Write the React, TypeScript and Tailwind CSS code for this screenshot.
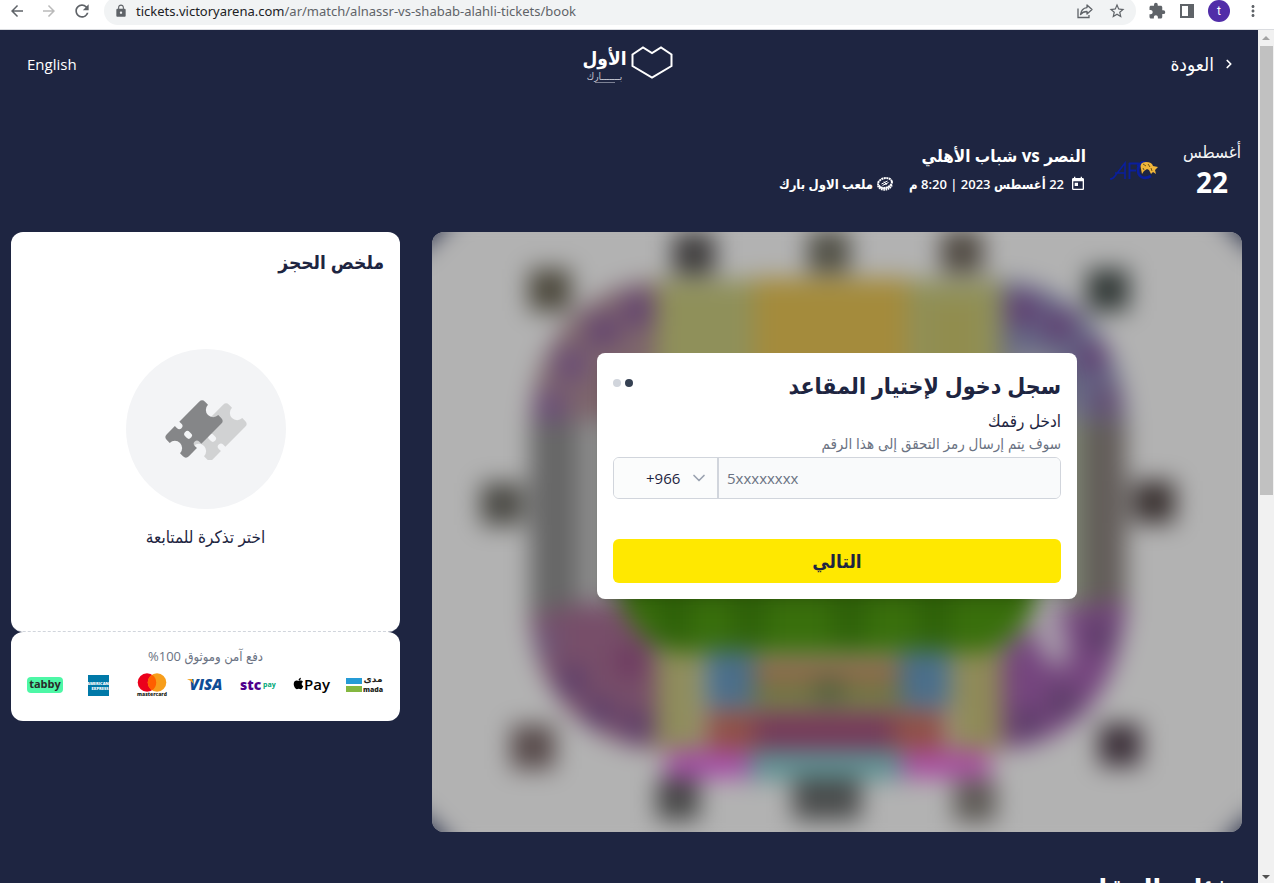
import type { ReactNode } from "react";
import {
  MdArrowBack,
  MdArrowForward,
  MdExtension,
  MdLock,
  MdMoreVert,
  MdRefresh,
  MdStarBorder,
  MdToday,
} from "react-icons/md";
import { FaApple } from "react-icons/fa";
import { LuChevronDown, LuChevronRight } from "react-icons/lu";

type Block = [x: number, y: number, w: number, h: number, fill: string];

const gates: Block[] = [
  [241, 1, 42, 42, "#3e3c3c"],
  [376, -1, 42, 42, "#504f45"],
  [509, -1, 42, 42, "#504a42"],
  [97, 37, 42, 42, "#4c483c"],
  [655, 37, 42, 42, "#323937"],
  [49, 251, 42, 42, "#4a4944"],
  [701, 249, 42, 42, "#3a3231"],
  [79, 493, 44, 44, "#584b4b"],
  [667, 492, 42, 42, "#3c3039"],
  [225, 546, 42, 42, "#464646"],
  [361, 546, 68, 42, "#4a4c4c"],
  [522, 548, 42, 42, "#5e5a56"],
];

const stands: Block[] = [
  [224, 48, 98, 100, "#8f905a"],
  [322, 46, 154, 100, "#a48b3c"],
  [476, 48, 94, 100, "#8f905a"],
  [497, 70, 50, 80, "#918d4e"],
  [224, 420, 46, 98, "#8f8d5c"],
  [520, 420, 50, 98, "#8f8a58"],
  [274, 418, 48, 58, "#4a6e8a"],
  [468, 418, 50, 58, "#4a6e8a"],
  [322, 426, 146, 26, "#8c684a"],
  [322, 452, 146, 26, "#6f7842"],
  [384, 446, 26, 26, "#54603e"],
  [274, 478, 48, 40, "#905046"],
  [462, 478, 52, 40, "#905046"],
  [322, 480, 140, 38, "#763858"],
  [234, 518, 84, 28, "#a44ea6"],
  [318, 518, 152, 30, "#609294"],
  [470, 518, 88, 28, "#a84ea0"],
];

const seatClusters: Block[] = [
  [104, 160, 30, 30, "#6a4e78"],
  [124, 118, 30, 30, "#6a4c76"],
  [156, 84, 30, 30, "#644470"],
  [192, 62, 30, 32, "#644470"],
  [576, 62, 30, 32, "#604072"],
  [612, 80, 30, 28, "#604072"],
  [646, 112, 28, 28, "#604072"],
  [660, 155, 28, 28, "#634c70"],
  [104, 395, 24, 30, "#6d5474"],
  [126, 435, 28, 28, "#5e406a"],
  [154, 466, 28, 28, "#5e406a"],
  [192, 480, 28, 28, "#5e406a"],
  [184, 414, 30, 30, "#6e3a60"],
  [654, 390, 28, 28, "#5c3e68"],
  [616, 456, 30, 28, "#5c3e68"],
  [580, 478, 30, 28, "#5c3e68"],
];

function StadiumMap() {
  return (
    <svg
      className="block h-full w-full"
      viewBox="0 0 810 600"
      preserveAspectRatio="xMidYMid slice"
      aria-hidden="true"
    >
      <defs>
        <filter id="haze" x="-5%" y="-5%" width="110%" height="110%" colorInterpolationFilters="sRGB">
          <feGaussianBlur stdDeviation="12" />
        </filter>
      </defs>
      <rect width="810" height="600" fill="#b2b2b2" />
      <g filter="url(#haze)">
        <path d="M-20-20H830V620H-20Z" fill="#b2b2b2" />
        <path d="M-20-20H27L-20 27ZM830-20H783L830 27ZM-20 620H27L-20 573ZM830 620H783L830 573Z" fill="#1e2541" />
        <path d="M98 188H146V390H98Z" fill="#666" />
        <path d="M146 188H190V390H146Z" fill="#8e8e8e" />
        <path d="M650 188H694V390H650Z" fill="#625c59" />
        <path d="M634 188H652V390H634Z" fill="#77806a" />
        <path d="M98 188C104 105 150 55 225 48V188Z" fill="#7d656c" />
        <path d="M569 48C645 55 688 105 694 188H620L569 150Z" fill="#656785" />
        <path d="M622 125L645 188H580V120Z" fill="#8b8b92" />
        <path d="M98 384C104 460 150 510 225 518V418L190 372H150Z" fill="#774e69" />
        <path d="M569 518C645 510 688 460 694 370L620 378L569 420Z" fill="#75457e" />
        <path d="M592 380L632 384L638 434L614 430Z" fill="#a89cab" />
        <path d="M188 190H604V372C590 404 570 420 545 422H250C220 420 200 395 188 370Z" fill="#396f0c" />
        {[225, 300, 400, 485].map((x) => (
          <path key={x} d={`M${x} 360h34v54h-34z`} fill="#2f620a" />
        ))}
        {[...stands, ...seatClusters, ...gates].map(([x, y, w, h, fill]) => (
          <rect key={`${x}-${y}-${fill}`} x={x} y={y} width={w} height={h} fill={fill} />
        ))}
      </g>
    </svg>
  );
}

function ShareIcon() {
  return (
    <svg className="size-4" viewBox="0 0 16 16" fill="none" stroke="#5f6368" strokeWidth="1.3" aria-hidden="true">
      <path d="M1 5.500V14.500H12V12" />
      <path d="M10 2L15 6.500L10 11V8.500C7 8.500 5 9.500 3.500 11.500C4 7.500 6.500 5 10 4.600Z" strokeLinejoin="round" />
    </svg>
  );
}

function BrowserBar() {
  return (
    <div
      dir="ltr"
      className="flex h-[30px] shrink-0 items-center border-b border-[#dadce0] bg-white pb-[7px] pl-2 pr-3 text-[#5f6368]"
    >
      <div className="flex gap-[14px]">
        <button type="button" aria-label="Back"><MdArrowBack className="size-[18px]" /></button>
        <button type="button" aria-label="Forward" className="text-[#bababa]"><MdArrowForward className="size-[18px]" /></button>
        <button type="button" aria-label="Reload"><MdRefresh className="size-5" /></button>
      </div>
      <div className="ml-3 flex h-7 flex-1 items-center rounded-full bg-[#f1f3f4] pl-[10px] pr-[10px]">
        <MdLock className="mr-2 size-[14px]" />
        <div className="flex-1 font-['Noto_Sans',sans-serif] text-[13px] leading-5">
          <span className="text-[#202124]">tickets.victoryarena.com</span>
          /ar/match/alnassr-vs-shabab-alahli-tickets/book
        </div>
        <div className="flex items-center gap-[15px]">
          <button type="button" aria-label="Share"><ShareIcon /></button>
          <button type="button" aria-label="Bookmark"><MdStarBorder className="size-[18px]" /></button>
        </div>
      </div>
      <div className="ml-3 flex items-center gap-[14px]">
        <button type="button" aria-label="Extensions"><MdExtension className="size-[18px]" /></button>
        <button type="button" aria-label="Side panel" className="flex h-[14px] w-[14px] border-2 border-[#5f6368]">
          <span className="ml-auto h-full w-1 bg-[#5f6368]" />
        </button>
        <button
          type="button"
          aria-label="Profile"
          className="flex size-[22px] items-center justify-center rounded-full bg-[#512da8] font-['Roboto',sans-serif] text-[12px] text-white"
        >
          t
        </button>
        <button type="button" aria-label="Menu"><MdMoreVert className="size-[18px]" /></button>
      </div>
    </div>
  );
}

function Logo() {
  return (
    <div dir="ltr" className="flex items-start justify-center gap-1 pr-2 text-white">
      <div dir="rtl" className="flex flex-col items-center">
        <span className="text-[19px] font-bold leading-6">الأول</span>
        <span className="text-[10px] leading-3 text-[#c4c7d1]">بـــــــارك</span>
        <span className="h-px w-5 bg-[#7c8194]" />
      </div>
      <svg className="h-[33px] w-[42px]" viewBox="0 0 42 33" fill="none" stroke="#fff" strokeWidth="2" aria-hidden="true">
        <path d="M1.500 8.500L12 1.500L21 7L30 1.500L40.500 8.500V20L21 31.500L1.500 20Z" />
      </svg>
    </div>
  );
}

function AfcLogo() {
  return (
    <svg className="h-6 w-12" viewBox="0 0 48 24" role="img" aria-label="AFC">
      <g fill="none" stroke="#0a1f9c">
        <path d="M0 21Q3 21 5 18L15 5V21M5 15H15" strokeWidth="1.600" />
        <path d="M19.500 21V5M19 5.500H28V8M19 12.500H26" strokeWidth="1.900" />
        <path d="M38 6C32 2 28 6 28 12C28 19 34 22 41 18" strokeWidth="2.600" />
      </g>
      <path d="M31 11Q29 4 36 4Q42 4 43 8L48 9L45 12L46 16L43 14L41 16L39 12L37 11L34 13L32 16Z" fill="#f0b53a" />
      <path d="M33 6L36 8M38 6L40 9M33 10L34 12M41 10L42 13" stroke="#6d5417" strokeWidth="1" />
    </svg>
  );
}

function StadiumIcon() {
  return (
    <svg className="h-[15px] w-4" viewBox="0 0 16 15" fill="none" stroke="#fff" aria-hidden="true">
      <ellipse cx="8" cy="6" rx="7" ry="4.800" strokeWidth="2" strokeDasharray="2 .5" transform="rotate(-12 8 6)" />
      <path d="M1.500 8.500C3 13 11 14 14.500 8" strokeWidth="3" strokeDasharray="1.500 .6" />
      <path d="M4.500 7L10.500 4M5.500 8.500L11.500 5.500M7 4.500L9.500 8" />
    </svg>
  );
}

function MatchInfo() {
  return (
    <section className="flex items-center gap-6">
      <div className="flex w-[60px] flex-col items-center">
        <span className="whitespace-nowrap text-[17px] leading-6 text-gray-100">أغسطس</span>
        <span className="text-[28px] font-bold leading-9">22</span>
      </div>
      <AfcLogo />
      <div>
        <h1 className="text-[17px] font-bold leading-7">النصر vs شباب الأهلي</h1>
        <div className="flex gap-4 text-[13px] font-semibold leading-7">
          <span className="flex items-center gap-[6px]">
            <MdToday className="size-4" />
            22 أغسطس 2023 | 8:20 م
          </span>
          <span className="flex items-center gap-1">
            <StadiumIcon />
            ملعب الاول بارك
          </span>
        </div>
      </div>
    </section>
  );
}

function TicketsIcon() {
  const ticket =
    "M0 4Q0 0 4 0H15V3A3 3 0 0 0 21 3V0H48Q52 0 52 4V8A7 7 0 0 0 52 22V26Q52 30 48 30H21V27A3 3 0 0 0 15 27V30H4Q0 30 0 26V22A7 7 0 0 0 0 8ZM18 11A3 3 0 0 0 15 14V16A3 3 0 0 0 21 16V14A3 3 0 0 0 18 11Z";
  return (
    <svg className="h-[62px] w-[84px]" viewBox="0 0 84 62" fillRule="evenodd" aria-hidden="true">
      <path d={ticket} fill="#d1d2d3" transform="translate(54 34) rotate(-45) scale(1.040) translate(-26 -15)" />
      <path d={ticket} fill="#858688" transform="translate(30 31) rotate(-45) scale(1.040) translate(-26 -15)" />
    </svg>
  );
}

function PayMark({ label, children }: { label: string; children: ReactNode }) {
  return (
    <svg className="h-6 w-[38px] font-['Open_Sans',sans-serif]" viewBox="0 0 38 24" role="img" aria-label={label}>
      {children}
    </svg>
  );
}

function PaymentMethods() {
  return (
    <div dir="ltr" className="flex items-center justify-between">
      <PayMark label="tabby">
        <rect x="0" y="4" width="36" height="16" rx="4" fill="#4df7a6" />
        <text x="18" y="15" textAnchor="middle" fontSize="11" fontWeight="700" fill="#292929">tabby</text>
      </PayMark>
      <PayMark label="American Express">
        <rect x="8" y="2" width="21" height="21" fill="#0079a8" />
        <text x="18" y="12" textAnchor="middle" fontSize="4" fontWeight="800" fill="#fff">AMERICAN</text>
        <text x="20" y="17" textAnchor="middle" fontSize="4" fontWeight="800" fill="#fff">EXPRESS</text>
      </PayMark>
      <PayMark label="mastercard">
        <circle cx="14" cy="9.500" r="9.300" fill="#eb001b" />
        <circle cx="24" cy="9.500" r="9.300" fill="#f79e1b" />
        <path d="M19 1.700A9.300 9.300 0 0 1 19 17.300A9.300 9.300 0 0 1 19 1.700Z" fill="#ff5f00" />
        <text x="19" y="23" textAnchor="middle" fontSize="5" fontWeight="800" fill="#231f20">mastercard</text>
      </PayMark>
      <PayMark label="Visa">
        <text x="20" y="17" textAnchor="middle" fontSize="15" fontWeight="800" fontStyle="italic" fill="#0e4c96">VISA</text>
        <path d="M1 6H6L8 11Q5 7.500 1 6Z" fill="#f2a52a" />
      </PayMark>
      <PayMark label="stc pay">
        <text x="0" y="17" fontSize="14" fontWeight="800" fill="#4f008c">stc</text>
        <text x="23" y="14" fontSize="7" fontWeight="700" fill="#00a878">pay</text>
      </PayMark>
      <PayMark label="Apple Pay">
        <FaApple x="-1" y="4" size="13" color="#000" />
        <text x="11" y="17" fontSize="15" fontWeight="600" fill="#000">Pay</text>
      </PayMark>
      <PayMark label="mada">
        <rect x="0" y="5" width="16" height="6" fill="#259bd6" />
        <rect x="0" y="13" width="16" height="6" fill="#84b740" />
        <text x="27" y="9" textAnchor="middle" fontSize="9" fontWeight="700" fill="#231f20" fontFamily="DejaVu Sans">مدى</text>
        <text x="17" y="19" fontSize="7" fontWeight="800" fill="#231f20">mada</text>
      </PayMark>
    </div>
  );
}

function BookingSummary() {
  return (
    <aside className="text-[#1e2541]">
      <div className="flex h-[400px] flex-col rounded-xl border-b border-dashed border-gray-300 bg-white px-4 pt-[14px]">
        <h2 className="text-[19px] font-semibold leading-8">ملخص الحجز</h2>
        <div className="mt-[71px] flex flex-col items-center gap-4">
          <div className="flex size-40 items-center justify-center rounded-full bg-gray-100">
            <TicketsIcon />
          </div>
          <p className="text-[17px] leading-6">اختر تذكرة للمتابعة</p>
        </div>
      </div>
      <div className="rounded-xl bg-white px-4 pb-6 pt-4">
        <p className="mb-2 text-center text-[13px] leading-[17px] text-gray-500">دفع آمن وموثوق 100%</p>
        <PaymentMethods />
      </div>
    </aside>
  );
}

function LoginCard() {
  return (
    <form className="w-full max-w-[480px] rounded-lg bg-white p-4 text-[#1e2541] shadow-lg">
      <div className="flex items-start justify-between">
        <h2 className="text-[23px] font-semibold leading-8">سجل دخول لإختيار المقاعد</h2>
        <div className="flex gap-1 pt-[10px]">
          <span className="size-2 rounded-full bg-gray-700" />
          <span className="size-2 rounded-full bg-gray-300" />
        </div>
      </div>
      <label htmlFor="phone" className="mt-2 block text-[17px] leading-6">ادخل رقمك</label>
      <p className="text-[15px] leading-5 text-gray-500">سوف يتم إرسال رمز التحقق إلى هذا الرقم</p>
      <div dir="ltr" className="mt-1 flex h-[42px] overflow-hidden rounded-md border border-gray-300">
        <div className="relative w-[105px] border-r-2 border-gray-300 bg-[#fbfcfc]">
          <select
            aria-label="رمز الدولة"
            className="h-full w-full appearance-none bg-transparent pl-8 text-[15px] outline-none"
          >
            <option>+966</option>
          </select>
          <LuChevronDown className="pointer-events-none absolute right-2 top-[10px] size-5 text-gray-400" />
        </div>
        <input
          id="phone"
          type="tel"
          placeholder="5xxxxxxxx"
          className="min-w-0 flex-1 bg-gray-50 px-2 text-[15px] outline-none placeholder:text-gray-500"
        />
      </div>
      <button type="button" className="mt-10 h-11 w-full rounded-md bg-[#ffe800] text-[19px] font-semibold">
        التالي
      </button>
    </form>
  );
}

function Scrollbar() {
  return (
    <div className="flex w-4 shrink-0 flex-col items-center justify-between bg-[#f1f1f1] pb-1">
      <div className="flex w-full flex-col items-center">
        <span className="my-[6px] border-x-4 border-b-4 border-x-transparent border-b-[#a3a3a3]" />
        <span className="h-[449px] w-[13px] bg-[#c1c1c1]" />
      </div>
      <span className="border-x-4 border-t-4 border-x-transparent border-t-[#505050]" />
    </div>
  );
}

export default function App() {
  return (
    <div className="flex h-screen flex-col overflow-hidden font-['Open_Sans','DejaVu_Sans_Condensed','DejaVu_Sans',sans-serif]">
      <BrowserBar />
      <div dir="ltr" className="flex min-h-0 flex-1">
        <main dir="rtl" className="min-w-0 flex-1 overflow-hidden bg-[#1e2541] pl-[11px] pr-4 text-white">
          <header className="grid h-[68px] grid-cols-3 items-center pl-4 pr-[6px]">
            <a href="#back" className="flex items-center gap-2 text-[19px] font-medium">
              <LuChevronRight className="size-[14px]" strokeWidth={3} />
              العودة
            </a>
            <Logo />
            <a href="#en" dir="ltr" className="text-left text-[15px] font-medium">English</a>
          </header>
          <div className="mb-8 mt-[42px]">
            <MatchInfo />
          </div>
          <div className="grid grid-cols-3 gap-8">
            <div className="relative col-span-2 h-[600px] overflow-hidden rounded-xl">
              <StadiumMap />
              <div className="absolute inset-0 flex items-start justify-center pt-[121px]">
                <LoginCard />
              </div>
            </div>
            <BookingSummary />
          </div>
          <h2 className="mt-9 pr-3 text-[28px] font-bold leading-10">فئات المقاعد</h2>
        </main>
        <Scrollbar />
      </div>
    </div>
  );
}
